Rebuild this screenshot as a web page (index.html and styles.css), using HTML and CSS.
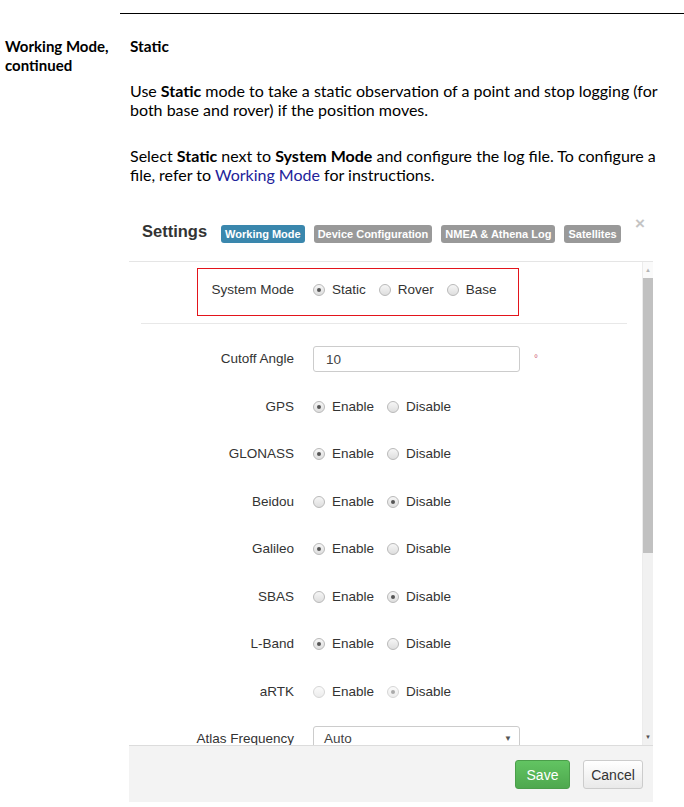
FILE: index.html
```html
<!DOCTYPE html>
<html>
<head>
  <title>Working Mode - Static</title>
  <link rel="stylesheet" href="styles.css">
</head>
<body>
  <div class="rule"></div>
  <div class="section">
    <div class="side">Working Mode,<br>continued</div>
    <div class="main">
      <h2>Static</h2>
      <p>Use <b>Static</b> mode to take a static observation of a point and stop logging (for both base and rover) if the position moves.</p>
      <p class="last">Select <b>Static</b> next to <b>System Mode</b> and configure the log file. To configure a file, refer to <a href="#">Working Mode</a> for instructions.</p>

      <div class="shot">
        <div class="modal-head">
          <h3 class="modal-title">Settings</h3>
          <div class="tabs">
            <span class="tab active">Working Mode</span>
            <span class="tab">Device Configuration</span>
            <span class="tab">NMEA &amp; Athena Log</span>
            <span class="tab">Satellites</span>
          </div>
          <span class="close">&times;</span>
        </div>

        <div class="modal-wrap">
          <div class="modal-body">
            <div class="highlight">
              <div class="field field-sys">
                <label class="field-label">System Mode</label>
                <div class="field-control">
                  <label class="opt"><input type="radio" name="sysmode" checked> Static</label>
                  <label class="opt"><input type="radio" name="sysmode"> Rover</label>
                  <label class="opt"><input type="radio" name="sysmode"> Base</label>
                </div>
              </div>
            </div>
            <hr class="sep">

            <div class="field">
              <label class="field-label">Cutoff Angle</label>
              <div class="field-control">
                <input class="text-input" type="text" value="10">
                <span class="unit">&deg;</span>
              </div>
            </div>
            <div class="field">
              <label class="field-label">GPS</label>
              <div class="field-control">
                <label class="opt"><input type="radio" name="gps" checked> Enable</label>
                <label class="opt"><input type="radio" name="gps"> Disable</label>
              </div>
            </div>
            <div class="field">
              <label class="field-label">GLONASS</label>
              <div class="field-control">
                <label class="opt"><input type="radio" name="glonass" checked> Enable</label>
                <label class="opt"><input type="radio" name="glonass"> Disable</label>
              </div>
            </div>
            <div class="field">
              <label class="field-label">Beidou</label>
              <div class="field-control">
                <label class="opt"><input type="radio" name="beidou"> Enable</label>
                <label class="opt"><input type="radio" name="beidou" checked> Disable</label>
              </div>
            </div>
            <div class="field">
              <label class="field-label">Galileo</label>
              <div class="field-control">
                <label class="opt"><input type="radio" name="galileo" checked> Enable</label>
                <label class="opt"><input type="radio" name="galileo"> Disable</label>
              </div>
            </div>
            <div class="field">
              <label class="field-label">SBAS</label>
              <div class="field-control">
                <label class="opt"><input type="radio" name="sbas"> Enable</label>
                <label class="opt"><input type="radio" name="sbas" checked> Disable</label>
              </div>
            </div>
            <div class="field">
              <label class="field-label">L-Band</label>
              <div class="field-control">
                <label class="opt"><input type="radio" name="lband" checked> Enable</label>
                <label class="opt"><input type="radio" name="lband"> Disable</label>
              </div>
            </div>
            <div class="field">
              <label class="field-label">aRTK</label>
              <div class="field-control">
                <label class="opt"><input type="radio" name="artk" disabled> Enable</label>
                <label class="opt"><input type="radio" name="artk" checked disabled> Disable</label>
              </div>
            </div>
            <div class="field">
              <label class="field-label">Atlas Frequency</label>
              <div class="field-control">
                <div class="select">Auto<span class="caret">&#9660;</span></div>
              </div>
            </div>
          </div>

          <div class="scrollbar">
            <div class="sb-btn sb-up">&#9650;</div>
            <div class="sb-thumb"></div>
            <div class="sb-track"></div>
            <div class="sb-btn sb-down">&#9660;</div>
          </div>
        </div>

        <div class="modal-foot">
          <button class="btn btn-save">Save</button>
          <button class="btn btn-cancel">Cancel</button>
        </div>
      </div>
    </div>
  </div>
</body>
</html>
```

FILE: styles.css
```css
body {
  margin: 0;
  font-family: Lato, "Liberation Sans", sans-serif;
  font-size: 15px;
  line-height: 18.5px;
  color: #000;
}
.rule {
  margin: 13px 0 0 120px;
  border-top: 1px solid #000;
}
.section {
  display: grid;
  grid-template-columns: 120px 1fr;
  padding-top: 23px;
}
.side {
  padding-left: 5px;
  font-weight: bold;
}
.main {
  padding-left: 10px;
}
.main h2 {
  margin: 0 0 25px;
  font-size: 15.4px;
  line-height: 18.5px;
  font-weight: bold;
}
.main p {
  margin: 0 0 27px;
  font-size: 16px;
  line-height: 19.2px;
}
.main p.last {
  margin-bottom: 20px;
}
.main a {
  color: #22229a;
  text-decoration: none;
}

/* settings dialog screenshot */
.shot {
  width: 524px;
  margin-left: -1px;
  font-family: "Liberation Sans", Arial, sans-serif;
  font-size: 13.5px;
  line-height: 18px;
  color: #333;
  background: #fff;
}
.modal-head {
  display: flex;
  align-items: center;
  height: 38px;
  padding: 9px 8px 10px 13px;
  border-bottom: 1px solid #e5e5e5;
}
.modal-title {
  margin: 0 14px 0 0;
  font-size: 16.5px;
  font-weight: bold;
  color: #333;
  position: relative;
  top: -1px;
}
.tabs {
  display: flex;
  gap: 9px;
  margin-top: 4px;
}
.tab {
  display: inline-block;
  height: 18px;
  line-height: 18px;
  padding: 0 4px;
  border-radius: 3px;
  background: #999;
  color: #fff;
  font-size: 11px;
  font-weight: bold;
  white-space: nowrap;
}
.tab.active {
  background: #3a87ad;
}
.close {
  margin-left: auto;
  align-self: flex-start;
  margin-top: 2px;
  font-size: 17px;
  font-weight: bold;
  color: #c4c4c4;
}

.modal-wrap {
  display: flex;
  height: 483px;
}
.modal-body {
  flex: 1;
  overflow: hidden;
}
.highlight {
  width: 320px;
  height: 46px;
  margin: 6px 0 0 68px;
  border: 1px solid #e3141b;
  display: flex;
  align-items: center;
}
.sep {
  margin: 7px 15px 0 12px;
  border: 0;
  border-top: 1px solid #e8e8e8;
}
.field {
  display: grid;
  grid-template-columns: 165px 1fr;
  column-gap: 19px;
  align-items: center;
  height: 26px;
  margin-bottom: 21.5px;
}
.modal-body .sep + .field {
  margin-top: 22px;
}
.field-sys {
  grid-template-columns: 96px 1fr;
  margin: -4px 0 0;
  width: 100%;
}
.field-label {
  text-align: right;
  white-space: nowrap;
}
.field-control {
  display: flex;
  align-items: center;
}
.opt {
  display: inline-flex;
  align-items: center;
  gap: 7px;
  margin-right: 13px;
}
.opt input {
  appearance: none;
  -webkit-appearance: none;
  margin: 0;
  width: 12px;
  height: 12px;
  border: 1px solid #b9b9b9;
  border-radius: 50%;
  background: linear-gradient(#f6f6f6, #dedede);
  position: relative;
}
.opt input:checked::after {
  content: "";
  position: absolute;
  left: 3px;
  top: 3px;
  width: 4px;
  height: 4px;
  border-radius: 50%;
  background: #555;
}
.opt input:disabled {
  border-color: #d6d6d6;
  background: linear-gradient(#fbfbfb, #ececec);
}
.opt input:disabled:checked::after {
  background: #aaa;
}
.text-input {
  box-sizing: border-box;
  width: 207px;
  height: 26px;
  padding: 0 12px;
  border: 1px solid #ccc;
  border-radius: 3px;
  font: 13.5px "Liberation Sans", Arial, sans-serif;
  color: #444;
}
.unit {
  margin-left: 14px;
  margin-top: 0;
  font-size: 10px;
  color: #d0667a;
}
.select {
  box-sizing: border-box;
  display: flex;
  align-items: center;
  justify-content: space-between;
  width: 207px;
  height: 26px;
  padding: 0 7px 0 10px;
  border: 1px solid #ccc;
  border-radius: 3px;
  color: #444;
}
.caret {
  font-size: 8px;
  color: #555;
}

.scrollbar {
  width: 10px;
  display: flex;
  flex-direction: column;
  background: #f1f1f1;
  border-left: 1px solid #ececec;
}
.sb-btn {
  height: 16px;
  font-size: 6px;
  line-height: 16px;
  text-align: center;
  background: #fafafa;
}
.sb-up {
  color: #b5b5b5;
}
.sb-down {
  color: #505050;
  background: #f1f1f1;
}
.sb-thumb {
  height: 275px;
  background: #c1c1c1;
}
.sb-track {
  flex: 1;
}

.modal-foot {
  display: flex;
  justify-content: flex-end;
  align-items: center;
  gap: 13px;
  height: 55px;
  padding: 1px 10px 0 0;
  border-top: 1px solid #dcdcdc;
  background: #f3f3f3;
}
.btn {
  height: 29px;
  border-radius: 3px;
  font: 14px "Liberation Sans", Arial, sans-serif;
  padding: 0;
  cursor: pointer;
}
.btn-save {
  width: 55px;
  color: #fff;
  border: 1px solid #4a9e4a;
  background: linear-gradient(#62c462, #4ea84e);
}
.btn-cancel {
  width: 60px;
  color: #333;
  border: 1px solid #ccc;
  background: linear-gradient(#ffffff, #e9e9e9);
}
```
